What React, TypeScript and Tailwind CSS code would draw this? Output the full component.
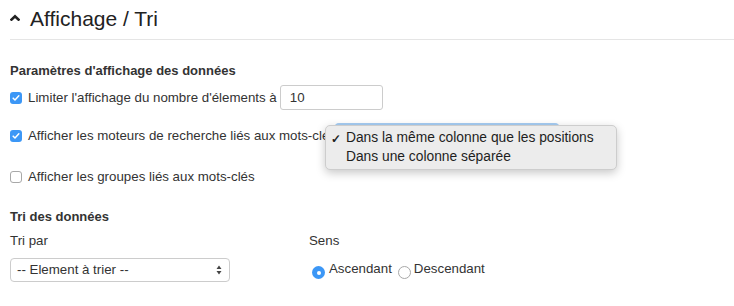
import React from "react";

function CheckBox({ checked }: { checked: boolean }) {
  return checked ? (
    <span className="w-[12px] h-[12px] rounded-[3px] bg-[#3c97f6] flex items-center justify-center shrink-0">
      <svg viewBox="0 0 12 12" className="w-[10px] h-[10px]">
        <path d="M2.6 6.2l2.2 2.2 4.6-5" fill="none" stroke="#fff" strokeWidth="1.8" strokeLinecap="round" strokeLinejoin="round" />
      </svg>
    </span>
  ) : (
    <span className="block w-[12px] h-[12px] rounded-[3px] bg-white border border-[#a8a8a8] shrink-0" />
  );
}

function Radio({ checked }: { checked: boolean }) {
  return checked ? (
    <span className="w-[13px] h-[13px] rounded-full bg-[#3c97f6] flex items-center justify-center shrink-0">
      <span className="block w-[4px] h-[4px] rounded-full bg-white" />
    </span>
  ) : (
    <span className="block w-[13px] h-[13px] rounded-full bg-white border border-[#a8a8a8] shrink-0" />
  );
}

export default function App() {
  return (
    <div className="w-[734px] h-[306px] bg-white text-[#333] text-[13.3px] overflow-hidden font-['Liberation_Sans',Arial,sans-serif]">
      {/* Header */}
      <div className="ml-[10px] pt-[6px] pb-[7px] border-b border-[#e5e5e5] flex items-center">
        <svg viewBox="0 0 10 7" className="w-[10px] h-[7px] mr-[10px] mt-[-4px]">
          <path d="M1.5 5.6L5 2.2l3.5 3.4" fill="none" stroke="#222" strokeWidth="2.6" strokeLinecap="square" />
        </svg>
        <h1 className="text-[21px] leading-[26px] text-[#222]">Affichage / Tri</h1>
      </div>

      <div className="px-[10px]">
        <h2 className="mt-[22px] font-bold text-[13px] leading-[18px]">Paramètres d'affichage des données</h2>

        <div className="mt-[5px] flex items-center h-[25px]">
          <CheckBox checked />
          <span className="ml-[6px]">Limiter l'affichage du nombre d'élements à</span>
          <div className="ml-[3px] w-[103px] h-[25px] border border-[#cccccc] rounded-[3px] flex items-center pl-[9px]">
            10
          </div>
        </div>

        <div className="mt-[13px] flex items-center h-[25px]">
          <CheckBox checked />
          <span className="ml-[6px] whitespace-nowrap">Afficher les moteurs de recherche liés aux mots-clés</span>
          <div className="relative shrink-0">
            <div className="ml-[-2px] w-[226px] h-[25px] border-2 border-[#a6cdf3] rounded-[5px]" />
            {/* open select menu */}
            <div className="absolute left-[-11px] top-[2px] w-[292px] h-[45px] bg-[#ececec] border border-[#cdcdcd] rounded-[5px] shadow-[0_3px_10px_rgba(0,0,0,0.22)] pt-[3px] text-[#1e1e1e] text-[13.8px]">
              <div className="flex items-center h-[19px]">
                <span className="w-[20px] pl-[5px] font-bold text-[12px]">✓</span>
                <span>Dans la même colonne que les positions</span>
              </div>
              <div className="flex items-center h-[19px]">
                <span className="w-[20px]" />
                <span>Dans une colonne séparée</span>
              </div>
            </div>
          </div>
        </div>

        <div className="mt-[20px] flex items-center h-[18px]">
          <CheckBox checked={false} />
          <span className="ml-[6px]">Afficher les groupes liés aux mots-clés</span>
        </div>

        <h2 className="mt-[22px] font-bold text-[13px] leading-[18px]">Tri des données</h2>

        <div className="mt-[6px] flex">
          <div className="w-[299px]">
            <div className="leading-[18px]">Tri par</div>
            <div className="mt-[8px] w-[220px] h-[24px] border border-[#cccccc] rounded-[4px] flex items-center justify-between pl-[6px] pr-[7px]">
              <span>-- Element à trier --</span>
              <svg viewBox="0 0 6 10" className="w-[6px] h-[10px]">
                <path d="M3 0.5L5.5 4H0.5z M3 9.5L5.5 6H0.5z" fill="#444" />
              </svg>
            </div>
          </div>
          <div>
            <div className="leading-[18px]">Sens</div>
            <div className="mt-[8px] h-[24px] flex items-center">
              <span className="ml-[3px] mt-[5px]"><Radio checked /></span>
              <span className="ml-[4px] mt-[-2px]">Ascendant</span>
              <span className="ml-[6px] mt-[5px]"><Radio checked={false} /></span>
              <span className="ml-[3px] mt-[-2px]">Descendant</span>
            </div>
          </div>
        </div>
      </div>
    </div>
  );
}
